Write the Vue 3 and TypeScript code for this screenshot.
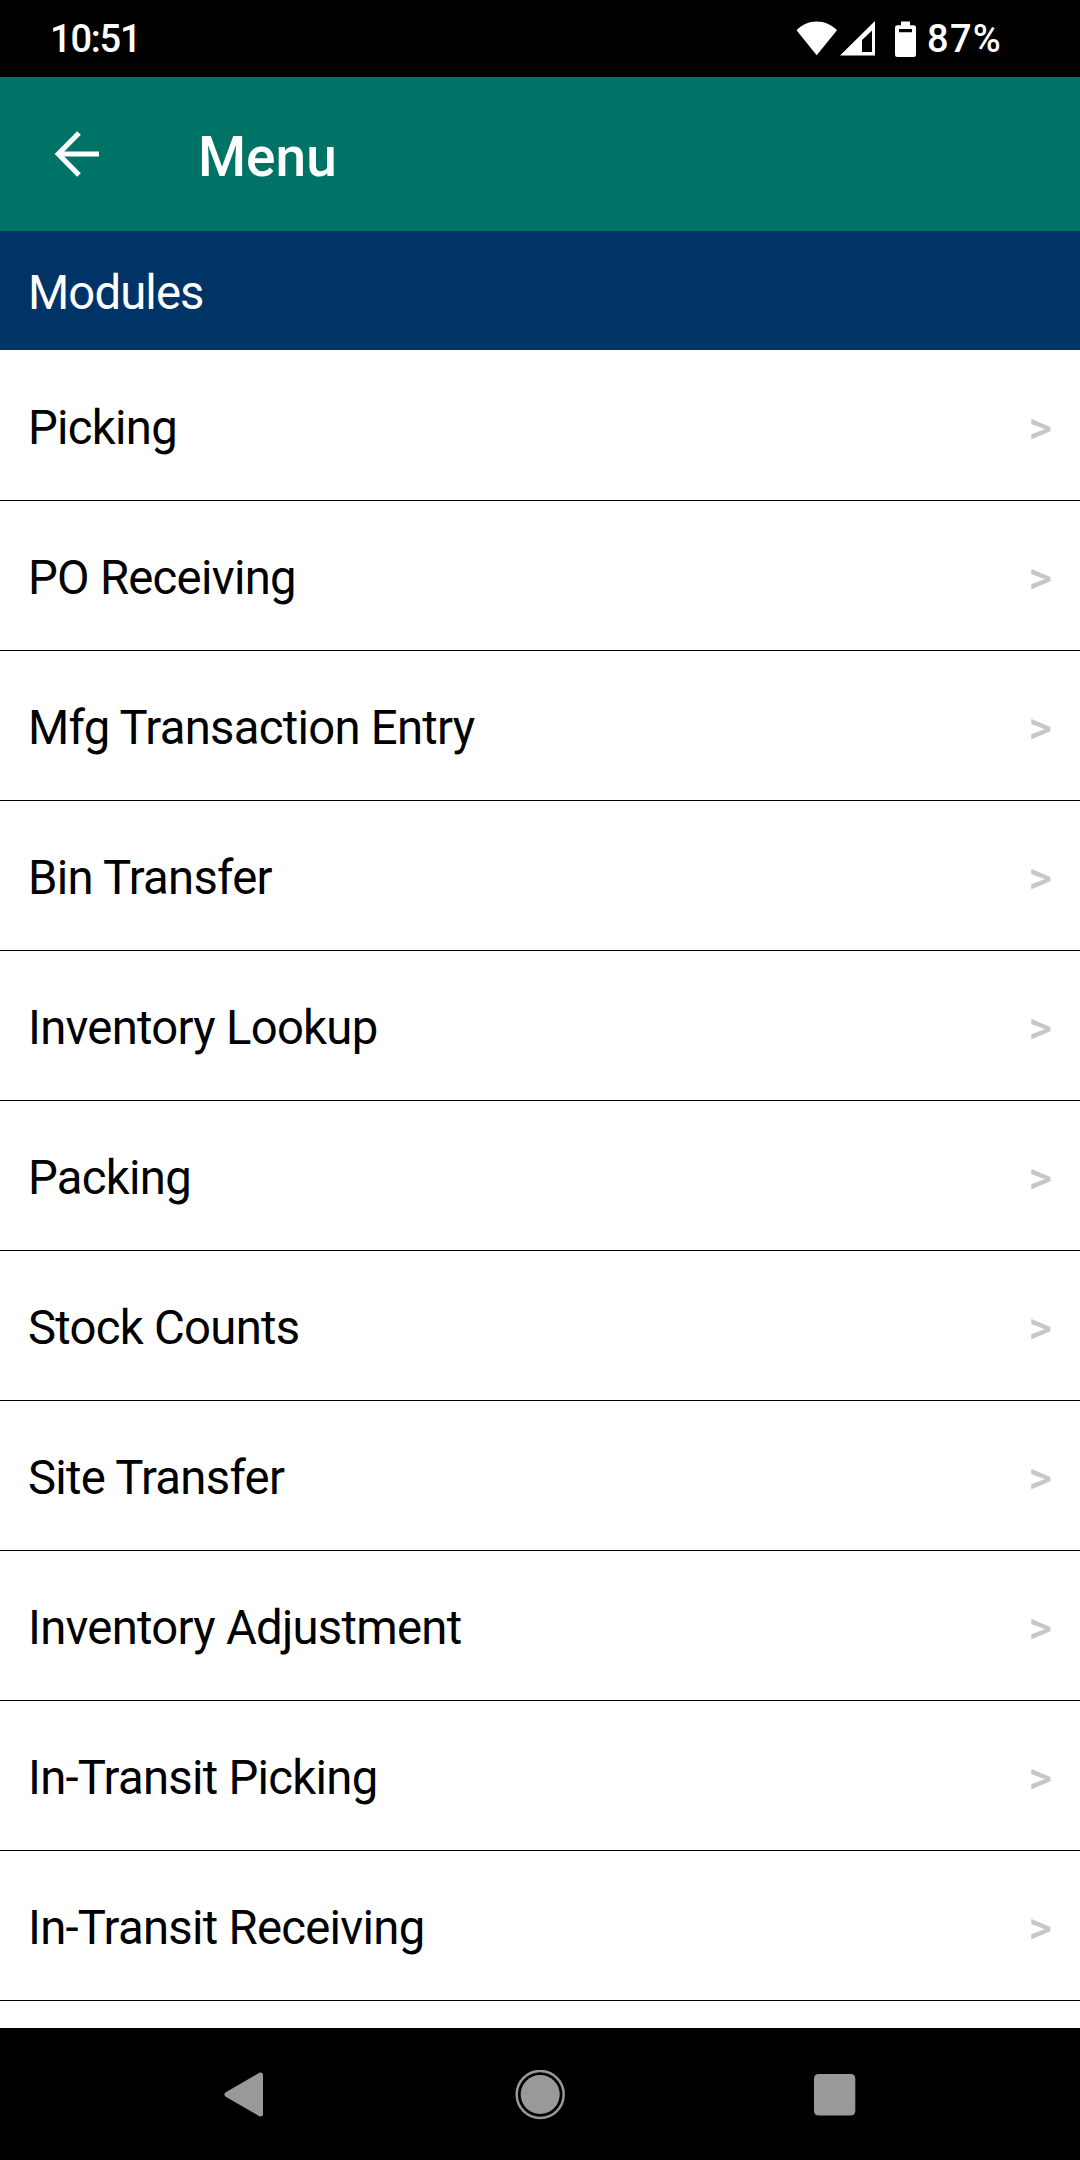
<script setup lang="ts">
const modules: string[] = [
  'Picking',
  'PO Receiving',
  'Mfg Transaction Entry',
  'Bin Transfer',
  'Inventory Lookup',
  'Packing',
  'Stock Counts',
  'Site Transfer',
  'Inventory Adjustment',
  'In-Transit Picking',
  'In-Transit Receiving',
]
</script>

<template>
  <div class="screen">
    <header class="status">
      <span class="clock">10:51</span>
      <div class="indicators">
        <svg class="wifi" width="42" height="36" viewBox="0 0 42 36">
          <path d="M0.5 10.2C6 4.5 13 1.4 20.7 1.4S35.300 4.500 41 10.200L20.700 35.300Z" fill="#fff" />
        </svg>
        <svg class="signal" width="35" height="36" viewBox="0 0 35 36">
          <path d="M35 1V35.500H0ZM32 10.500L22 20V32H32Z" fill="#fff" fill-rule="evenodd" />
        </svg>
        <svg class="battery" width="21" height="36" viewBox="0 0 21 36">
          <path d="M6 0.500H15V4.200H18.500Q21 4.200 21 6.700V33.500Q21 36 18.500 36H2.500Q0 36 0 33.500V6.700Q0 4.200 2.500 4.200H6ZM4 8V11.300H17V8Z" fill="#fff" fill-rule="evenodd" />
        </svg>
        <span class="percent">87%</span>
      </div>
    </header>
    <nav class="toolbar">
      <svg class="back" width="46" height="46" viewBox="0 0 46 46">
        <path d="M25 2L4.300 23L25 44M5 23H45" fill="none" stroke="#fff" stroke-width="5.200" />
      </svg>
      <h1 class="title">Menu</h1>
    </nav>
    <h2 class="section"><span>Modules</span></h2>
    <ul class="list">
      <li v-for="name in modules" :key="name" class="row">
        <span class="name">{{ name }}</span>
        <span class="chevron">&gt;</span>
      </li>
    </ul>
    <footer class="navbar">
      <svg width="40" height="46" viewBox="0 0 40 46">
        <path d="M3 22.500L36.500 3V42Z" fill="#999" stroke="#999" stroke-width="5" stroke-linejoin="round" />
      </svg>
      <svg width="52" height="50" viewBox="0 0 52 50">
        <circle cx="27.200" cy="24.500" r="23.500" fill="none" stroke="#999" stroke-width="2.500" />
        <circle cx="27.200" cy="24.500" r="19.500" fill="#999" />
      </svg>
      <svg width="42" height="42" viewBox="0 0 42 42">
        <rect width="41.300" height="41.500" rx="4.500" fill="#999" />
      </svg>
    </footer>
  </div>
</template>

<style>
body {
  margin: 0;
  background: #fff;
}
</style>

<style scoped>
.screen {
  display: flex;
  flex-direction: column;
  width: 1080px;
  height: 2160px;
  overflow: hidden;
  background: #fff;
  font-family: Roboto, 'Liberation Sans', sans-serif;
}
.status {
  box-sizing: border-box;
  flex: none;
  display: flex;
  justify-content: space-between;
  height: 77px;
  padding: 0 78px 0 50px;
  background: #000;
  color: #fff;
  font-size: 38px;
  font-weight: 500;
  line-height: 79px;
}
.clock {
  letter-spacing: -1.2px;
}
.indicators {
  display: flex;
  align-items: flex-start;
}
.wifi {
  margin-top: 20px;
}
.signal {
  margin: 20px 0 0 2px;
}
.battery {
  margin: 21px 11px 0 20px;
}
.percent {
  width: 75px;
  white-space: nowrap;
  letter-spacing: 1.3px;
}
.toolbar {
  box-sizing: border-box;
  flex: none;
  display: flex;
  align-items: center;
  height: 154px;
  padding-left: 54px;
  background: #007367;
  color: #fff;
}
.title {
  margin: 5px 0 0 98px;
  font-size: 55px;
  font-weight: 500;
  line-height: 64px;
}
.section {
  flex: none;
  box-sizing: border-box;
  height: 119px;
  margin: 0;
  padding: 2px 0 0 28px;
  background: #003366;
  color: #fff;
  font-size: 47.25px;
  font-weight: 400;
  line-height: 120px;
  letter-spacing: -0.9px;
}
.list {
  flex: 1;
  margin: 0;
  padding: 1px 0 0;
  list-style: none;
}
.row {
  box-sizing: border-box;
  display: flex;
  align-items: center;
  justify-content: space-between;
  height: 150px;
  padding: 5px 28px 0;
  border-bottom: 1px solid #000;
}
.name {
  color: #000;
  font-size: 47.25px;
  line-height: 56px;
  letter-spacing: -0.72px;
}
.chevron {
  color: #c7c7c7;
  font-size: 45px;
  font-weight: 500;
  line-height: 56px;
}
.navbar {
  box-sizing: border-box;
  flex: none;
  display: flex;
  align-items: center;
  justify-content: space-between;
  height: 132px;
  padding: 1px 224px 0;
  background: #000;
}
</style>
